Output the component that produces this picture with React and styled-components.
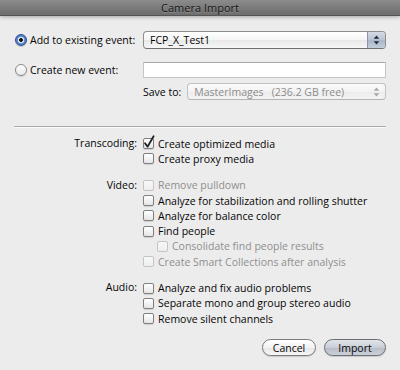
import React from 'react';
import styled, { createGlobalStyle } from 'styled-components';

const GlobalStyle = createGlobalStyle`
  html, body {
    margin: 0;
    padding: 0;
    background: #ececec;
  }
  body {
    font-family: 'Open Sans', 'Liberation Sans', sans-serif;
    font-size: 10.5px;
    color: #050505;
  }
`;

const transcoding = [{ label: 'Create optimized media', checked: true }, { label: 'Create proxy media' }];

const video = [
  { label: 'Remove pulldown', disabled: true },
  { label: 'Analyze for stabilization and rolling shutter' },
  { label: 'Analyze for balance color' },
  { label: 'Find people' },
  { label: 'Consolidate find people results', disabled: true, indent: true },
  { label: 'Create Smart Collections after analysis', disabled: true },
];

const audio = [
  { label: 'Analyze and fix audio problems' },
  { label: 'Separate mono and group stereo audio' },
  { label: 'Remove silent channels' },
];

function Arrows({ disabled }) {
  return (
    <svg width='7' height='10' viewBox='0 0 7 10'>
      <path d='M3.5 0.5 L6.3 3.8 H0.7 Z M0.7 6.2 H6.3 L3.5 9.5 Z' fill={disabled ? '#a8a8a8' : '#262a33'} />
    </svg>
  );
}

function Option({ label, checked, disabled, indent }) {
  return (
    <OptionRow $indent={indent} $disabled={disabled}>
      <CheckBox $disabled={disabled}>
        {checked && (
          <svg width='11' height='11' viewBox='0 0 11 11'>
            <path d='M2 5.3 L4.6 8.6 L10.6 -1.8' fill='none' stroke='#1e1e1e' strokeWidth='1.8' strokeLinejoin='round' strokeLinecap='round' />
          </svg>
        )}
      </CheckBox>
      {label}
    </OptionRow>
  );
}

function Group({ title, options }) {
  return (
    <GroupRow>
      <GroupLabel>{title}</GroupLabel>
      <OptionList>
        {options.map((o) => (
          <Option key={o.label} {...o} />
        ))}
      </OptionList>
    </GroupRow>
  );
}

export default function App() {
  return (
    <>
      <GlobalStyle />
      <Window>
        <TitleBar>Camera Import</TitleBar>

        <EventRow $top={15} $height={18}>
          <RadioLabel>
            <Radio $selected />
            Add to existing event:
          </RadioLabel>
          <Popup>
            <PopupText>FCP_X_Test1</PopupText>
            <Stepper>
              <Arrows />
            </Stepper>
          </Popup>
        </EventRow>

        <EventRow $top={13} $height={16}>
          <RadioLabel>
            <Radio />
            Create new event:
          </RadioLabel>
          <TextField />
        </EventRow>

        <EventRow $top={5} $height={17}>
          <span />
          <SaveTo>
            <SaveLabel>Save to:</SaveLabel>
            <Popup $disabled>
              <PopupText $disabled>{'MasterImages   (236.2 GB free)'}</PopupText>
              <Stepper $disabled>
                <Arrows disabled />
              </Stepper>
            </Popup>
          </SaveTo>
        </EventRow>

        <Separator />

        <Options>
          <Group title='Transcoding:' options={transcoding} />
          <Group title='Video:' options={video} />
          <Group title='Audio:' options={audio} />
        </Options>

        <Footer>
          <Button>Cancel</Button>
          <Button $default>Import</Button>
        </Footer>
      </Window>
    </>
  );
}

const Window = styled.div`
  width: 400px;
  height: 370px;
  background: #ececec;
  display: flex;
  flex-direction: column;
  overflow: hidden;
`;

const TitleBar = styled.div`
  position: relative;
  z-index: 1;
  height: 15px;
  display: flex;
  align-items: center;
  justify-content: center;
  background: linear-gradient(#8c8c8c, #7b7b7b 50%, #6e6e6e);
  border-bottom: 1px solid #555555;
  box-shadow: 0 1px 4px rgba(0, 0, 0, 0.3);
  font-size: 11px;
  line-height: 15px;
  color: #161616;
  text-shadow: 0 1px 0 rgba(255, 255, 255, 0.2);
`;

const EventRow = styled.div`
  display: grid;
  grid-template-columns: 128px 243px;
  align-items: center;
  height: ${(props) => props.$height}px;
  margin-top: ${(props) => props.$top}px;
  padding: 0 14px 0 15px;
`;

const RadioLabel = styled.label`
  display: flex;
  align-items: center;
  gap: 3px;
  white-space: nowrap;
`;

const Radio = styled.span`
  width: 12px;
  height: 12px;
  box-sizing: border-box;
  border-radius: 50%;
  flex-shrink: 0;
  border: 1px solid ${(props) => (props.$selected ? '#2e4f8c' : '#8a8a8a')};
  background: ${(props) =>
    props.$selected
      ? 'radial-gradient(circle, #1a1a1a 0 1.6px, #d9e3f3 2.2px 3px, #5d8ad0 3.6px, #3d6bb8 100%)'
      : 'linear-gradient(#ffffff, #e9e9e9)'};
  box-shadow: 0 1px 1px rgba(0, 0, 0, 0.15);
`;

const Popup = styled.div`
  flex: 1;
  height: 100%;
  box-sizing: border-box;
  display: flex;
  align-items: stretch;
  border: 1px solid ${(props) => (props.$disabled ? '#c2c2c2' : '#8d8d8d')};
  border-bottom-color: ${(props) => (props.$disabled ? '#b4b4b4' : '#6f6f6f')};
  border-radius: 4px;
  overflow: hidden;
  background: ${(props) =>
    props.$disabled
      ? 'linear-gradient(#fbfbfb, #f3f3f3 50%, #ececec 51%, #f4f4f4)'
      : 'linear-gradient(#ffffff, #f4f4f4 50%, #e8e8e8 51%, #f7f7f7)'};
`;

const PopupText = styled.span`
  flex: 1;
  display: flex;
  align-items: center;
  padding-left: 6px;
  white-space: pre;
  color: ${(props) => (props.$disabled ? '#8c8c8c' : '#050505')};
`;

const Stepper = styled.span`
  width: 17px;
  display: flex;
  align-items: center;
  justify-content: center;
  border-left: 1px solid ${(props) => (props.$disabled ? 'transparent' : '#8c95a3')};
  background: ${(props) =>
    props.$disabled ? 'transparent' : 'linear-gradient(#d4dbe6, #b8c3d3 50%, #a9b6c9 51%, #c3cddb)'};
`;

const TextField = styled.div`
  height: 16px;
  box-sizing: border-box;
  background: #ffffff;
  border: 1px solid #c6c6c6;
  border-top-color: #a9a9a9;
`;

const SaveTo = styled.div`
  display: flex;
  align-items: center;
  gap: 6px;
  height: 100%;
`;

const SaveLabel = styled.span`
  white-space: nowrap;
`;

const Separator = styled.div`
  margin: 26px 14px 0;
  height: 1px;
  background: #a8a8a8;
  border-bottom: 1px solid #fbfbfb;
`;

const Options = styled.div`
  display: flex;
  flex-direction: column;
  gap: 11px;
  margin-top: 8px;
`;

const GroupRow = styled.div`
  display: grid;
  grid-template-columns: 137px 1fr;
  column-gap: 6px;
`;

const GroupLabel = styled.span`
  text-align: right;
  line-height: 15.3px;
  white-space: nowrap;
`;

const OptionList = styled.div`
  display: flex;
  flex-direction: column;
`;

const OptionRow = styled.div`
  display: flex;
  align-items: center;
  gap: 4px;
  height: 15.3px;
  padding-left: ${(props) => (props.$indent ? 14 : 0)}px;
  white-space: nowrap;
  color: ${(props) => (props.$disabled ? '#8f8f8f' : '#050505')};
`;

const CheckBox = styled.span`
  width: 11px;
  height: 11px;
  box-sizing: border-box;
  flex-shrink: 0;
  display: flex;
  border-radius: 2px;
  border: 1px solid ${(props) => (props.$disabled ? '#c4c4c4' : '#7f7f7f')};
  background: ${(props) =>
    props.$disabled ? 'linear-gradient(#f8f8f8, #eeeeee)' : 'linear-gradient(#ffffff, #e6e6e6)'};
  box-shadow: ${(props) => (props.$disabled ? 'none' : '0 1px 1px rgba(0, 0, 0, 0.12)')};

  svg {
    overflow: visible;
    margin: -1px 0 0 -1px;
  }
`;

const Footer = styled.div`
  display: flex;
  justify-content: flex-end;
  gap: 8px;
  margin-top: 13px;
  padding: 0 14px;
`;

const Button = styled.button`
  height: 17px;
  width: ${(props) => (props.$default ? 62 : 54)}px;
  padding: 0;
  border-radius: 9px;
  font-family: inherit;
  font-size: 10.5px;
  color: #050505;
  border: 1px solid ${(props) => (props.$default ? '#6a6d73' : '#7a7a7a')};
  background: ${(props) =>
    props.$default
      ? 'linear-gradient(#e2e5ea, #c9ced6 50%, #b6bcc6 51%, #ccd1d9)'
      : 'linear-gradient(#ffffff, #f3f3f3 50%, #e6e6e6 51%, #f7f7f7)'};
  box-shadow: 0 1px 1px rgba(0, 0, 0, 0.15);
`;
